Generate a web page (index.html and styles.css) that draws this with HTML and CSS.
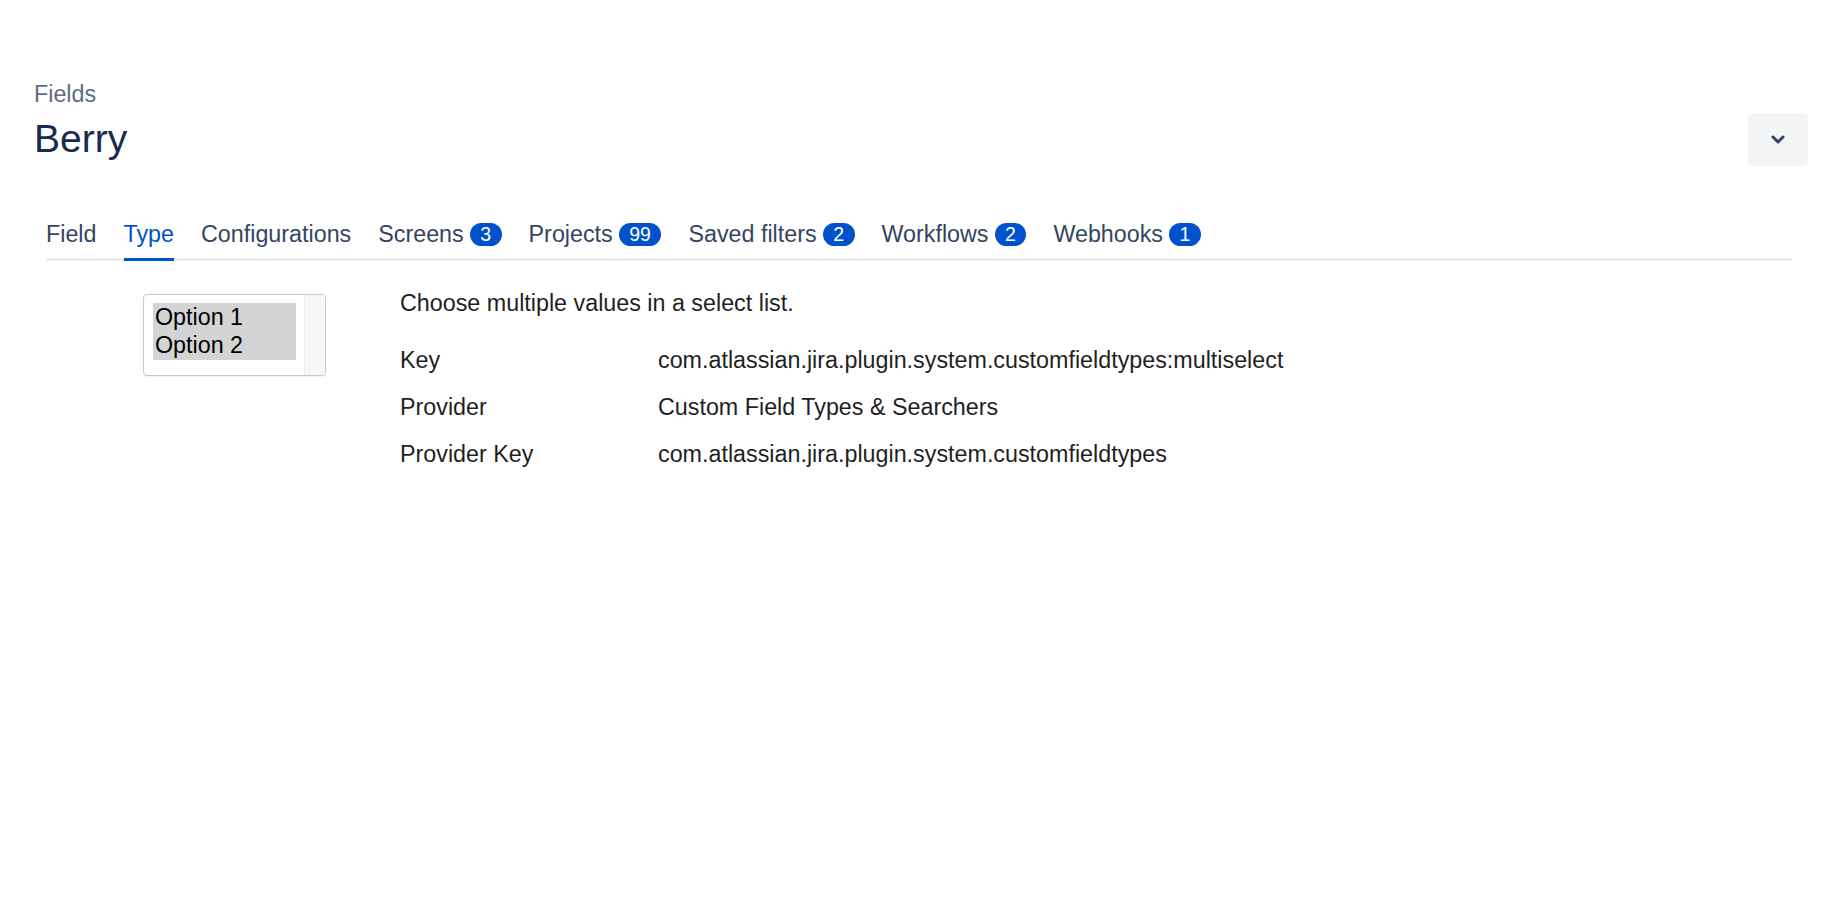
FILE: index.html
```html
<!DOCTYPE html>
<html lang="en">
<head>
  <meta charset="UTF-8" />
  <meta name="viewport" content="width=device-width, initial-scale=1.0" />
  <title>Berry - Fields</title>
  <link rel="stylesheet" href="styles.css">
</head>
<body>
  <div class="page">
    <div class="header">
      <div class="heading">
        <div class="crumb">Fields</div>
        <h1 class="title">Berry</h1>
      </div>
      <button class="more-btn" aria-label="More actions">
        <svg width="14" height="9" viewBox="0 0 14 9">
          <path d="M2 2l5 5 5-5" fill="none" stroke="#344563" stroke-width="3" stroke-linecap="round" stroke-linejoin="round"/>
        </svg>
      </button>
    </div>

    <div class="tabs">
      <div class="tab">Field</div>
      <div class="tab active">Type</div>
      <div class="tab">Configurations</div>
      <div class="tab">Screens <span class="badge">3</span></div>
      <div class="tab">Projects <span class="badge">99</span></div>
      <div class="tab">Saved filters <span class="badge">2</span></div>
      <div class="tab">Workflows <span class="badge">2</span></div>
      <div class="tab">Webhooks <span class="badge">1</span></div>
    </div>

    <div class="type-panel">
      <div class="preview">
        <div class="preview-list">
          <div class="preview-option">Option 1</div>
          <div class="preview-option">Option 2</div>
        </div>
        <div class="preview-scroll"></div>
      </div>

      <div class="type-info">
        <p class="type-desc">Choose multiple values in a select list.</p>
        <div class="type-props">
          <div class="prop-label">Key</div>
          <div class="prop-value">com.atlassian.jira.plugin.system.customfieldtypes:multiselect</div>
          <div class="prop-label">Provider</div>
          <div class="prop-value">Custom Field Types &amp; Searchers</div>
          <div class="prop-label">Provider Key</div>
          <div class="prop-value">com.atlassian.jira.plugin.system.customfieldtypes</div>
        </div>
      </div>
    </div>
  </div>
</body>
</html>
```

FILE: styles.css
```css
body {
  font-family: "Liberation Sans", Arial, Helvetica, sans-serif;
  margin: 0;
  background: #fff;
  color: #172b4d;
}
.page {
  padding: 78px 32px 0 34px;
}
.header {
  display: flex;
  justify-content: space-between;
  align-items: flex-start;
}
.crumb {
  font-size: 23.3px;
  line-height: 32px;
  color: #5e6c84;
}
.title {
  margin: 5px 0 0;
  font-size: 39px;
  line-height: 48px;
  font-weight: 400;
  color: #172b4d;
}
.more-btn {
  margin-top: 35px;
  width: 60px;
  height: 53px;
  border: none;
  border-radius: 5px;
  background: #f4f5f7;
  display: flex;
  align-items: center;
  justify-content: center;
  padding: 0;
  cursor: pointer;
}
.tabs {
  display: flex;
  gap: 27px;
  margin: 52px 16px 0 12px;
  border-bottom: 3px solid #ebecf0;
}
.tab {
  display: flex;
  align-items: center;
  gap: 6px;
  font-size: 23.3px;
  line-height: 32px;
  color: #344563;
  padding-bottom: 8px;
  margin-bottom: -3px;
  border-bottom: 3px solid transparent;
  cursor: pointer;
}
.tab.active {
  color: #0052cc;
  border-bottom-color: #0052cc;
}
.badge {
  display: inline-block;
  height: 23px;
  line-height: 23px;
  padding: 0 10.5px;
  border-radius: 12px;
  background: #0052cc;
  color: #fff;
  font-size: 19.5px;
}
.type-panel {
  display: flex;
  align-items: flex-start;
  margin-top: 26px;
  padding-left: 109px;
}
.preview {
  display: flex;
  margin-top: 7px;
  margin-right: 74px;
  width: 183px;
  height: 82px;
  box-sizing: border-box;
  border: 1px solid #c8c8c8;
  border-radius: 4px;
  box-shadow: 0 1px 1px rgba(0, 0, 0, 0.06);
  overflow: hidden;
}
.preview-list {
  flex: 1;
  padding: 8px 8px 0 9px;
}
.preview-option {
  background: #d4d4d4;
  color: #000;
  font-size: 23.3px;
  line-height: 28.3px;
  padding-left: 2px;
}
.preview-scroll {
  width: 20px;
  background: #f7f7f7;
  border-left: 1px solid #ececec;
}
.type-info {
  color: #1f1f1f;
  font-size: 23.3px;
  line-height: 32px;
}
.type-desc {
  margin: 0 0 25px;
}
.type-props {
  display: grid;
  grid-template-columns: 258px auto;
  row-gap: 14.8px;
}
```
